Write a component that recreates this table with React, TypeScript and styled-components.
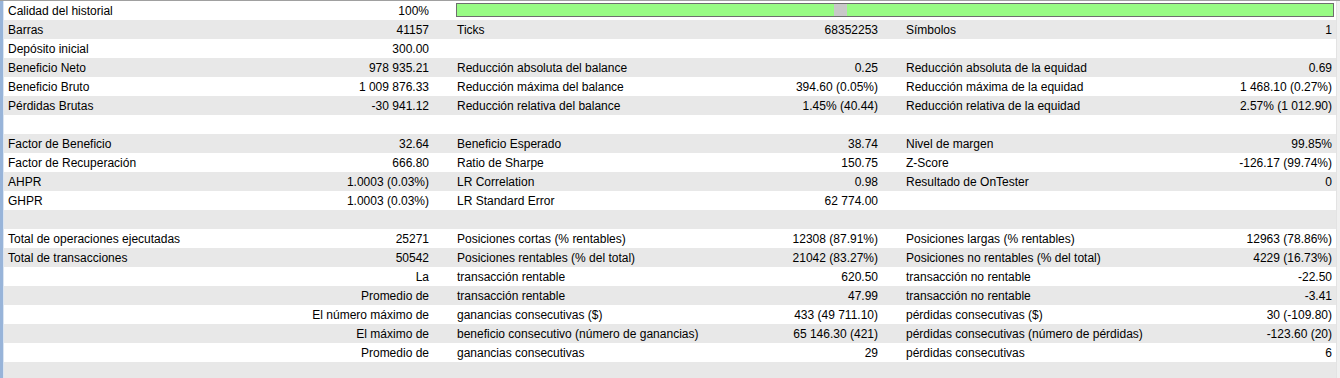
import React from 'react';
import styled, { createGlobalStyle } from 'styled-components';

const GlobalStyle = createGlobalStyle`
  html, body {
    margin: 0;
    padding: 0;
    background: #ffffff;
  }
  body {
    font-family: "Liberation Sans", Arial, sans-serif;
    font-size: 12px;
    color: #000000;
  }
`;

const Frame = styled.div`
  width: 1340px;
  height: 378px;
  overflow: hidden;
  display: flex;
  border-top: 1px solid #a0a0a0;
  box-sizing: border-box;
`;

const SideStrip = styled.div`
  width: 3px;
  flex: none;
  background: #98b4d9;
  border-right: 1px solid #dbe5f1;
`;

const Report = styled.div`
  width: 1332px;
  flex: none;
  display: flex;
  flex-direction: column;
`;

const ScrollEdge = styled.div`
  flex: 1;
  background: #f0f0f0;
  border-left: 1px solid #e3e3e3;
`;

const Row = styled.div<{ $shaded: boolean }>`
  height: 19px;
  flex: none;
  display: grid;
  grid-template-columns: 429px 449px 454px;
  background: ${p => (p.$shaded ? '#e8e8e8' : '#ffffff')};
  line-height: 21px;
  white-space: nowrap;
  overflow: hidden;
`;

const Section = styled.div<{ $first?: boolean }>`
  display: flex;
  justify-content: space-between;
  padding-left: ${p => (p.$first ? '4px' : '24px')};
  padding-right: 4px;
  overflow: hidden;
`;

const Label = styled.span``;

const Value = styled.span`
  margin-left: auto;
  text-align: right;
`;

const BarCell = styled.div`
  grid-column: 2 / span 2;
  padding: 2px 2px 2px 23px;
  display: flex;
  box-sizing: border-box;
`;

const Bar = styled.div`
  flex: 1;
  display: flex;
  border: 1px solid #6e6e6e;
  background: #98fb84;
  height: 14px;
  box-sizing: border-box;
`;

const BarGap = styled.div`
  width: 13px;
  margin-left: 377px;
  background: #c8c8c8;
`;

type Pair = [string, string] | null;

const rows: Pair[][] = [
  [['Barras', '41157'], ['Ticks', '68352253'], ['Símbolos', '1']],
  [['Depósito inicial', '300.00'], null, null],
  [['Beneficio Neto', '978 935.21'], ['Reducción absoluta del balance', '0.25'], ['Reducción absoluta de la equidad', '0.69']],
  [['Beneficio Bruto', '1 009 876.33'], ['Reducción máxima del balance', '394.60 (0.05%)'], ['Reducción máxima de la equidad', '1 468.10 (0.27%)']],
  [['Pérdidas Brutas', '-30 941.12'], ['Reducción relativa del balance', '1.45% (40.44)'], ['Reducción relativa de la equidad', '2.57% (1 012.90)']],
  [null, null, null],
  [['Factor de Beneficio', '32.64'], ['Beneficio Esperado', '38.74'], ['Nivel de margen', '99.85%']],
  [['Factor de Recuperación', '666.80'], ['Ratio de Sharpe', '150.75'], ['Z-Score', '-126.17 (99.74%)']],
  [['AHPR', '1.0003 (0.03%)'], ['LR Correlation', '0.98'], ['Resultado de OnTester', '0']],
  [['GHPR', '1.0003 (0.03%)'], ['LR Standard Error', '62 774.00'], null],
  [null, null, null],
  [['Total de operaciones ejecutadas', '25271'], ['Posiciones cortas (% rentables)', '12308 (87.91%)'], ['Posiciones largas (% rentables)', '12963 (78.86%)']],
  [['Total de transacciones', '50542'], ['Posiciones rentables (% del total)', '21042 (83.27%)'], ['Posiciones no rentables (% del total)', '4229 (16.73%)']],
  [['', 'La'], ['transacción rentable', '620.50'], ['transacción no rentable', '-22.50']],
  [['', 'Promedio de'], ['transacción rentable', '47.99'], ['transacción no rentable', '-3.41']],
  [['', 'El número máximo de'], ['ganancias consecutivas ($)', '433 (49 711.10)'], ['pérdidas consecutivas ($)', '30 (-109.80)']],
  [['', 'El máximo de'], ['beneficio consecutivo (número de ganancias)', '65 146.30 (421)'], ['pérdidas consecutivas (número de pérdidas)', '-123.60 (20)']],
  [['', 'Promedio de'], ['ganancias consecutivas', '29'], ['pérdidas consecutivas', '6']],
  [null, null, null],
];

const App: React.FC = () => {
  return (
    <>
      <GlobalStyle />
      <Frame>
        <SideStrip />
        <Report>
          <Row $shaded={false}>
            <Section $first>
              <Label>Calidad del historial</Label>
              <Value>100%</Value>
            </Section>
            <BarCell>
              <Bar>
                <BarGap />
              </Bar>
            </BarCell>
          </Row>
          {rows.map((cells, i) => (
            <Row key={i} $shaded={i % 2 === 0}>
              {cells.map((c, j) => (
                <Section key={j} $first={j === 0}>
                  {c && <Label>{c[0]}</Label>}
                  {c && <Value>{c[1]}</Value>}
                </Section>
              ))}
            </Row>
          ))}
        </Report>
        <ScrollEdge />
      </Frame>
    </>
  );
};

export default App;
